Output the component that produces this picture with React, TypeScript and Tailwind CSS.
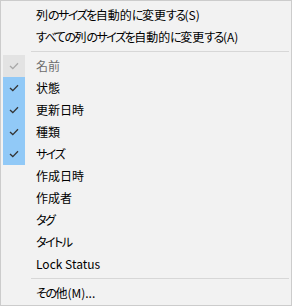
const font = "font-['Noto_Sans_CJK_JP','Noto_Sans',sans-serif] [font-feature-settings:'palt']";

type Item = { label: string; checked?: boolean; disabled?: boolean };

const columns: Item[] = [
  { label: "名前", checked: true, disabled: true },
  { label: "状態", checked: true },
  { label: "更新日時", checked: true },
  { label: "種類", checked: true },
  { label: "サイズ", checked: true },
  { label: "作成日時" },
  { label: "作成者" },
  { label: "タグ" },
  { label: "タイトル" },
  { label: "Lock Status" },
];

// kana in the reference font run narrower than in Noto, so tighten them
const Label = ({ text }: { text: string }) => {
  const parts = text.split(/([\u3040-\u30ff]+)/).filter(Boolean);
  return (
    <>
      {parts.map((p, i) =>
        /[\u3040-\u30ff]/.test(p) ? (
          <span key={i} className="tracking-[-1.5px]">{p}</span>
        ) : (
          <span key={i}>{p}</span>
        )
      )}
    </>
  );
};

const Check = ({ color }: { color: string }) => (
  <svg width="10" height="8" viewBox="0 0 10 8" fill="none">
    <path d="M1 4 L3.8 6.6 L9 1.2" stroke={color} strokeWidth="1.3" />
  </svg>
);

const Row = ({ item }: { item: Item }) => {
  const box = item.checked ? (item.disabled ? "bg-[#e3e3e3]" : "bg-[#91c9f7]") : "";
  return (
    <div className="flex h-[22px] items-center">
      <div className={`flex h-full w-[22px] items-center justify-center ${box}`}>
        {item.checked && <Check color={item.disabled ? "#a8a8a8" : "#333333"} />}
      </div>
      <span className={`ml-[11px] text-[12px] leading-none ${item.disabled ? "text-[#6d6d6d]" : "text-black"}`}>
        <Label text={item.label} />
      </span>
    </div>
  );
};

const Separator = () => (
  <div className="flex h-[7px] items-center pl-[28px]">
    <div className="h-px w-full bg-[#d7d7d7]" />
  </div>
);

export default function App() {
  return (
    <div className={`h-[306px] w-[292px] border border-[#cccccc] bg-[#f2f2f2] px-[2px] pt-[3px] ${font}`}>
      <Row item={{ label: "列のサイズを自動的に変更する(S)" }} />
      <Row item={{ label: "すべての列のサイズを自動的に変更する(A)" }} />
      <Separator />
      {columns.map((c) => (
        <Row key={c.label} item={c} />
      ))}
      <Separator />
      <Row item={{ label: "その他(M)..." }} />
    </div>
  );
}
